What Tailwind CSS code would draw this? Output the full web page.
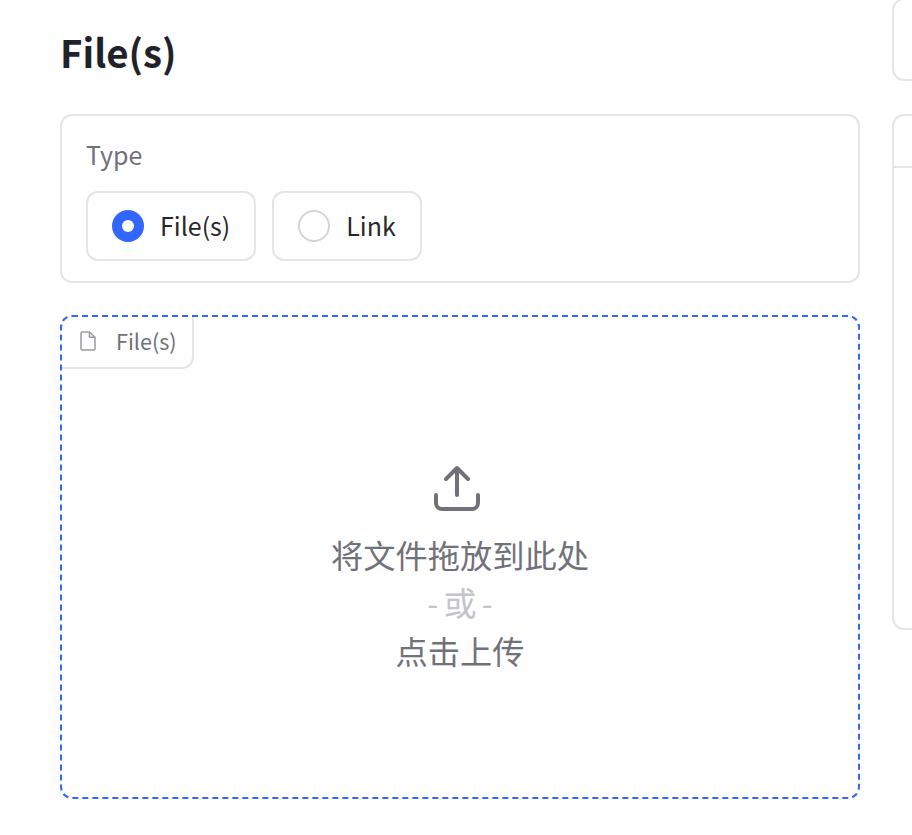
<!DOCTYPE html>
<html lang="en">
<head>
    <meta charset="UTF-8">
    <title>File(s)</title>
    <script src="https://cdn.jsdelivr.net/npm/@tailwindcss/browser@4"></script>
</head>
<body class="bg-white overflow-hidden font-['Noto_Sans_CJK_SC','Noto_Sans',sans-serif]">
    <div class="flex h-[835px] gap-8 pl-[60px] overflow-hidden">
        <!-- Left column -->
        <div class="w-[800px] shrink-0">
            <h1 class="h-[114px] pt-[24px] text-[38.4px] leading-[54px] font-semibold text-[#1f2329]">File(s)</h1>

            <!-- Type card -->
            <div class="h-[169px] border-2 border-[#e5e5e5] rounded-xl px-[24px] pt-[22px]">
                <div class="text-[25px] leading-[36px] text-[#71717a] -mt-[2px]">Type</div>
                <div class="flex gap-4 mt-[19px]">
                    <label class="flex items-center gap-[16px] h-[70px] px-[24px] border-2 border-[#e5e5e5] rounded-xl text-[25px] text-[#27272a]">
                        <span class="w-8 h-8 rounded-full bg-[#3366ff] flex items-center justify-center"><span class="w-3 h-3 rounded-full bg-white"></span></span>
                        <span>File(s)</span>
                    </label>
                    <label class="flex items-center gap-[16px] h-[70px] px-[24px] border-2 border-[#e5e5e5] rounded-xl text-[25px] text-[#27272a]">
                        <span class="w-8 h-8 rounded-full border-2 border-[#d4d4d8]"></span>
                        <span>Link</span>
                    </label>
                </div>
            </div>

            <!-- Upload area -->
            <div class="relative mt-8 h-[484px] border-2 border-dashed border-[#3366ff] rounded-xl flex flex-col items-center pt-[148px]">
                <div class="absolute -left-[2px] -top-[2px] h-[54px] w-[134px] flex items-center gap-[20px] pl-[20px] border-2 border-[#e5e5e5] border-t-0 border-l-0 rounded-br-xl text-[21.6px] text-[#71717a] -z-10">
                    <svg class="w-[16px] h-[20px] shrink-0" viewBox="0 0 16 20" fill="none" stroke="#9a9aa0" stroke-width="1.5" stroke-linejoin="round"><path d="M1 2.2A1.2 1.2 0 0 1 2.2 1h7.3l5.5 5.2v11.6a1.2 1.2 0 0 1-1.2 1.2H2.2A1.2 1.2 0 0 1 1 17.800z"/><path d="M9.500 1v5.200H15"/></svg>
                    <span>File(s)</span>
                </div>
                <div class="flex flex-col items-center text-[32.25px] leading-[48px] text-[#71717a]">
                    <svg class="w-12 h-12 mb-[17px] mr-[6px]" viewBox="0 0 48 48" fill="none" stroke="#71717a" stroke-width="4" stroke-linecap="round" stroke-linejoin="round"><path d="M24 30V4"/><path d="M13 14L24 3l11 11"/><path d="M3 30v8a6 6 0 0 0 6 6h30a6 6 0 0 0 6-6v-8"/></svg>
                    <span>将文件拖放到此处</span>
                    <span class="flex gap-[5px] text-[#c4c4c9]"><span>-</span><span class="text-[33px]">或</span><span>-</span></span>
                    <span>点击上传</span>
                </div>
            </div>
        </div>

        <!-- Right column, cut off by the window -->
        <div class="w-[300px] shrink-0">
            <div class="h-[83px] -mt-[2px] border-2 border-[#e5e5e5] rounded-xl"></div>
            <div class="mt-[33px] h-[516px] border-2 border-[#e5e5e5] rounded-xl">
                <div class="h-[52px] border-b-2 border-[#e5e5e5]"></div>
            </div>
        </div>
    </div>
</body>
</html>
